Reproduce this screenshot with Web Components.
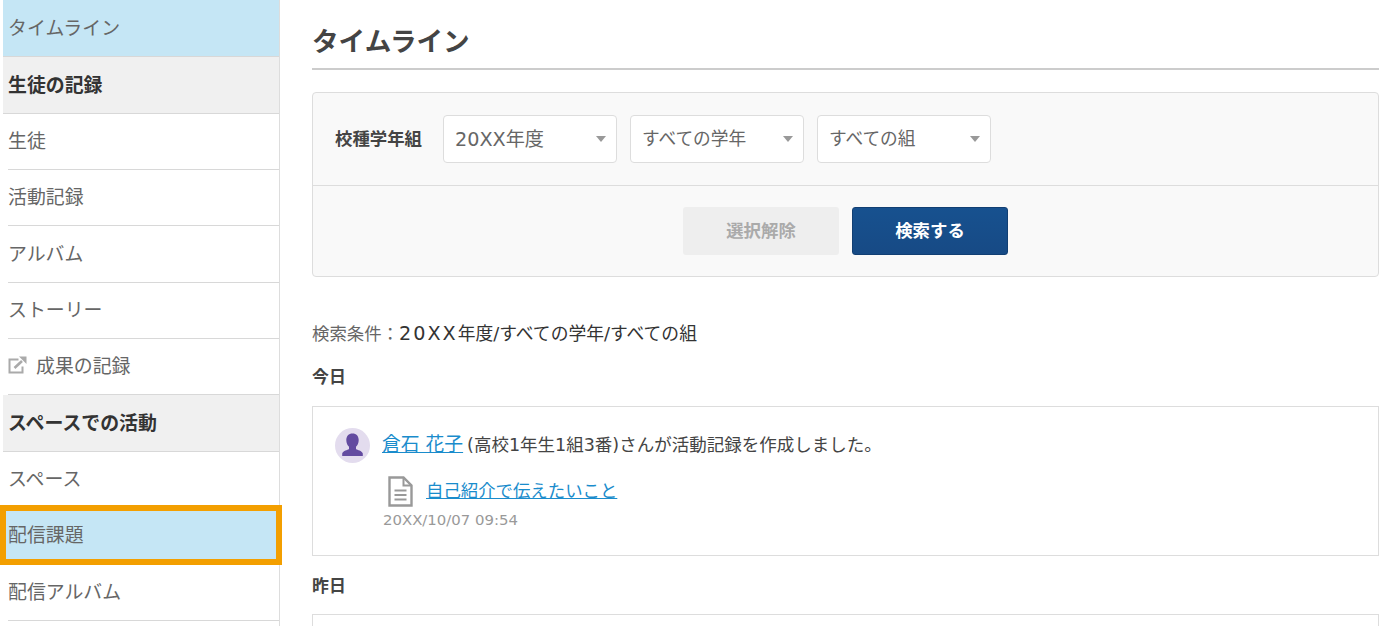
<!DOCTYPE html>
<html lang="ja">
<head>
<meta charset="utf-8">
<title>タイムライン</title>
<style>
html, body { margin: 0; height: 626px; overflow: hidden; background: #fff; }
body { font-family: "DejaVu Sans", "Noto Sans CJK JP", sans-serif; color: #444; }
</style>
</head>
<body>
<app-page>
  <side-nav slot="nav">
    <nav-item state="active" first>タイムライン</nav-item>
    <nav-item state="head">生徒の記録</nav-item>
    <nav-item>生徒</nav-item>
    <nav-item>活動記録</nav-item>
    <nav-item>アルバム</nav-item>
    <nav-item>ストーリー</nav-item>
    <nav-item external>成果の記録</nav-item>
    <nav-item state="head">スペースでの活動</nav-item>
    <nav-item>スペース</nav-item>
    <nav-item state="active" marked>配信課題</nav-item>
    <nav-item>配信アルバム</nav-item>
  </side-nav>
  <time-line>
    <search-panel>
      <select-box slot="selects" big>20XX年度</select-box>
      <select-box slot="selects">すべての学年</select-box>
      <select-box slot="selects">すべての組</select-box>
    </search-panel>
    <search-summary><i>検索条件：</i><b>20XX</b>年度/すべての学年/すべての組</search-summary>
    <day-head>今日</day-head>
    <activity-card>
      <a slot="name" href="#">倉石 花子</a>
      <span slot="rest">(高校1年生1組3番)さんが活動記録を作成しました。</span>
      <a slot="doc" href="#">自己紹介で伝えたいこと</a>
      <span slot="time">20XX/10/07 09:54</span>
    </activity-card>
    <day-head class="second">昨日</day-head>
    <empty-card></empty-card>
  </time-line>
</app-page>

<script>
function shadow(el, html) {
    el.attachShadow({mode: "open"}).innerHTML = html;
}

class AppPage extends HTMLElement {
    connectedCallback() {
        shadow(this, `
        <style>
            :host { display: flex; align-items: flex-start; height: 626px; overflow: hidden; }
            .main { flex: 1; min-width: 0; }
        </style>
        <slot name="nav"></slot>
        <div class="main"><slot></slot></div>`);
    }
}

class SideNav extends HTMLElement {
    connectedCallback() {
        shadow(this, `
        <style>
            :host { display: block; width: 276px; height: 626px; margin-left: 3px; flex: none;
                    border-right: 1px solid #ddd; }
        </style>
        <slot></slot>`);
    }
}

class NavItem extends HTMLElement {
    connectedCallback() {
        const icon = this.hasAttribute("external") ? `
            <svg width="19" height="18" viewBox="0 0 19 18" fill="none" stroke="#aaa" stroke-width="2">
                <path d="M10.500 3.500H1.500v13h13v-6"/>
                <path d="M6.500 12 14 5" stroke-width="2.600"/>
                <path d="M11 .5h7.500V8z" fill="#aaa" stroke="none"/>
            </svg>` : "";
        shadow(this, `
        <style>
            :host { display: block; position: relative; height: 56.33px; }
            :host([first]) { height: 57.33px; }
            .row { display: flex; align-items: center; gap: 9px; height: 100%; box-sizing: border-box;
                   margin-left: 5px; padding: 0 0 3.400px; font-size: 18.900px; color: #666;
                   border-bottom: 1px solid #d8d8d8; }
            :host([state=active]) .row { margin-left: 0; padding-left: 5px; background: #c5e6f5; }
            :host([state=head]) .row { margin-left: 0; padding-left: 5px; padding-bottom: 2px; background: #f0f0f0;
                   font-weight: 700; color: #333; }
            :host([first]) .row { padding-bottom: 3px; }
            :host([marked]) .row { border-bottom: 0; padding-bottom: 6px; }
            .mark { position: absolute; left: -3px; right: -3px; top: -3px; bottom: -1px;
                    border: 6px solid #f39f00; pointer-events: none; }
            svg { flex: none; }
        </style>
        <div class="row">${icon}<span><slot></slot></span></div>
        ${this.hasAttribute("marked") ? '<div class="mark"></div>' : ""}`);
    }
}

class TimeLine extends HTMLElement {
    connectedCallback() {
        shadow(this, `
        <style>
            :host { display: block; padding: 0 15px 0 32px; }
            h1 { margin: 0 0 22px; height: 70px; box-sizing: border-box; padding-top: 23px;
                 font-size: 26.600px; line-height: 38px; font-weight: 700; color: #444;
                 border-bottom: 2px solid #ccc; }
        </style>
        <h1>タイムライン</h1>
        <slot></slot>`);
    }
}

class SearchPanel extends HTMLElement {
    connectedCallback() {
        shadow(this, `
        <style>
            :host { display: block; box-sizing: border-box; height: 185px; background: #f9f9f9;
                    border: 1px solid #ddd; border-radius: 4px; }
            .filters { display: flex; align-items: center; height: 93px; box-sizing: border-box;
                       padding: 0 0 1px 22px; border-bottom: 1px solid #ddd; }
            label { font-size: 17.400px; font-weight: 700; color: #444; margin-right: 21px; padding-bottom: 2px; }
            .selects { display: flex; gap: 13px; }
            .actions { display: flex; justify-content: center; gap: 13px; padding-top: 21px; }
            button { width: 156px; height: 47.500px; padding: 0 0 2px; border-radius: 3px;
                     font: 700 17.400px "DejaVu Sans", "Noto Sans CJK JP", sans-serif; }
            .clear { background: #eee; color: #aaa; border: 0; }
            .go { background: linear-gradient(#17518f, #174a85); color: #fff; border: 1px solid #123f73; }
        </style>
        <div class="filters">
            <label>校種学年組</label>
            <div class="selects"><slot name="selects"></slot></div>
        </div>
        <div class="actions">
            <button class="clear">選択解除</button>
            <button class="go">検索する</button>
        </div>`);
    }
}

class SelectBox extends HTMLElement {
    connectedCallback() {
        shadow(this, `
        <style>
            :host { display: flex; align-items: center; justify-content: space-between; box-sizing: border-box;
                    width: 174px; height: 48px; padding: 0 10px 3px 11px;
                    background: #fff; border: 1px solid #ddd; border-radius: 4px;
                    font-size: 17.700px; color: #666; }
            :host([big]) { font-size: 19.200px; padding-bottom: 2px; }
            i { width: 0; height: 0; border: 5px solid transparent; border-top: 6px solid #999; border-bottom: 0; margin-top: 3px; }
            :host([big]) i { margin-top: 2px; }
        </style>
        <span><slot></slot></span><i></i>`);
    }
}

class SearchSummary extends HTMLElement {
    connectedCallback() {
        shadow(this, `
        <style>
            :host { display: block; margin-top: 45px; height: 24px; font-size: 17.800px; line-height: 24px; color: #333; }
            ::slotted(i) { font-style: normal; font-size: 17.400px; color: #666; }
            ::slotted(b) { font-weight: 400; font-size: 19.200px; letter-spacing: 2px; }
        </style>
        <slot></slot>`);
    }
}

class DayHead extends HTMLElement {
    connectedCallback() {
        shadow(this, `
        <style>
            :host { display: block; margin-top: 19px; height: 24px; font-size: 16.900px; line-height: 24px;
                    font-weight: 700; color: #444; }
            :host(.second) { margin-top: 18px; }
        </style>
        <slot></slot>`);
    }
}

class ActivityCard extends HTMLElement {
    connectedCallback() {
        shadow(this, `
        <style>
            :host { display: block; box-sizing: border-box; height: 150px; margin-top: 17px;
                    padding: 21px 22px 0; border: 1px solid #ddd; }
            .who { display: flex; align-items: center; gap: 12px; height: 35px; font-size: 17.500px; color: #444; }
            .avatar { flex: none; width: 35px; height: 35px; }
            ::slotted(a) { color: #1a8ccc; }
            .name ::slotted(a) { font-size: 18.800px; }
            .name { display: flex; align-items: baseline; gap: 4px; padding-bottom: 6px; }
            .doc { display: flex; align-items: center; gap: 13px; margin: 13px 0 0 53px; height: 31px; font-size: 17.400px; }
            .doc svg { flex: none; }
            .link { padding-bottom: 4px; }
            .time { margin: 3px 0 0 48px; font-size: 14.900px; line-height: 20px; color: #999; }
        </style>
        <div class="who">
            <svg class="avatar" viewBox="0 0 35 35">
                <circle cx="17.500" cy="17.500" r="17.500" fill="#e3dcee"/>
                <path d="M17.500 5.500c-3.900 0-6.200 2.700-6.200 6.600 0 2.900 1.100 5.300 2.700 6.700v2.100c-1.500 1.200-5.800 1.500-6.800 4.600v2.600h20.600v-2.600c-1-3.100-5.300-3.400-6.800-4.600v-2.100c1.600-1.400 2.700-3.800 2.700-6.700 0-3.900-2.300-6.600-6.200-6.600z" fill="#634ba0"/>
            </svg>
            <div class="name"><slot name="name"></slot><slot name="rest"></slot></div>
        </div>
        <div class="doc">
            <svg width="25" height="31" viewBox="0 0 25 31" fill="none" stroke="#999" stroke-width="2.400">
                <path d="M1.500 1.500h14l8 8v20h-22z"/>
                <path d="M15.500 1.500v8h8" stroke-width="2"/>
                <path d="M6.500 14.500h12M6.500 19h12M6.500 23.500h12" stroke-width="1.800"/>
            </svg>
            <span class="link"><slot name="doc"></slot></span>
        </div>
        <div class="time"><slot name="time"></slot></div>`);
    }
}

class EmptyCard extends HTMLElement {
    connectedCallback() {
        shadow(this, `
        <style>
            :host { display: block; height: 80px; margin-top: 16px; border: 1px solid #ddd; }
        </style>`);
    }
}

customElements.define("app-page", AppPage);
customElements.define("side-nav", SideNav);
customElements.define("nav-item", NavItem);
customElements.define("time-line", TimeLine);
customElements.define("search-panel", SearchPanel);
customElements.define("select-box", SelectBox);
customElements.define("search-summary", SearchSummary);
customElements.define("day-head", DayHead);
customElements.define("activity-card", ActivityCard);
customElements.define("empty-card", EmptyCard);
</script>
</body>
</html>
